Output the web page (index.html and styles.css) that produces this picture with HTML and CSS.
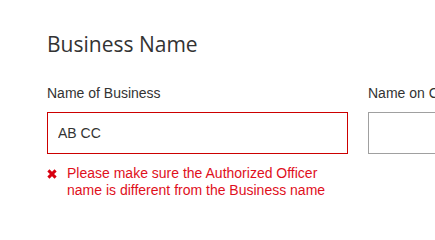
FILE: index.html
```html
<!DOCTYPE html>
<html>
<head>
<meta charset="utf-8">
<link rel="stylesheet" href="styles.css">
</head>
<body>
<section class="section">
  <h2 class="title">Business Name</h2>
  <div class="row">
    <div class="field">
      <label class="label" for="bn">Name of Business</label>
      <input class="input input-error" id="bn" type="text" value="AB CC">
      <div class="error">
        <svg class="error-icon" width="10" height="10" viewBox="0 0 10 10"><path d="M1.4 1.4 L8.6 8.6 M8.6 1.4 L1.4 8.6" stroke="#d8000f" stroke-width="3" stroke-linecap="butt"/></svg>
        <span class="error-text">Please make sure the Authorized Officer name is different from the Business name</span>
      </div>
    </div>
    <div class="field">
      <label class="label" for="nc">Name on Card</label>
      <input class="input" id="nc" type="text" value="">
    </div>
  </div>
</section>
</body>
</html>
```
FILE: styles.css
```css
html, body {
  margin: 0;
  padding: 0;
  background: #fff;
  overflow: hidden;
}
.section {
  padding: 31px 0 0 47px;
  font-family: "Liberation Sans", Arial, sans-serif;
  color: #333;
}
.title {
  margin: 0;
  font-family: "Open Sans", sans-serif;
  font-weight: 400;
  font-size: 21px;
  line-height: 27px;
  color: #333;
}
.row {
  display: flex;
  gap: 20px;
  margin-top: 27px;
}
.field {
  width: 301px;
  flex-shrink: 0;
  display: flex;
  flex-direction: column;
}
.label {
  font-size: 14px;
  line-height: 16px;
  color: #333;
  white-space: nowrap;
}
.input {
  box-sizing: border-box;
  margin: 11px 0 0;
  height: 42px;
  width: 301px;
  padding: 0 10px;
  border: 1px solid #a0a0a0;
  border-radius: 0;
  font-family: "Liberation Sans", Arial, sans-serif;
  font-size: 14px;
  color: #333;
  background: #fff;
  outline: none;
}
.input-error {
  border-color: #cc0000;
}
.error {
  display: flex;
  gap: 10px;
  margin-top: 11px;
  color: #e0101c;
  font-size: 14px;
  line-height: 17px;
}
.error-icon {
  flex-shrink: 0;
  margin-top: 4px;
}
.error-text {
  width: 281px;
}
```
